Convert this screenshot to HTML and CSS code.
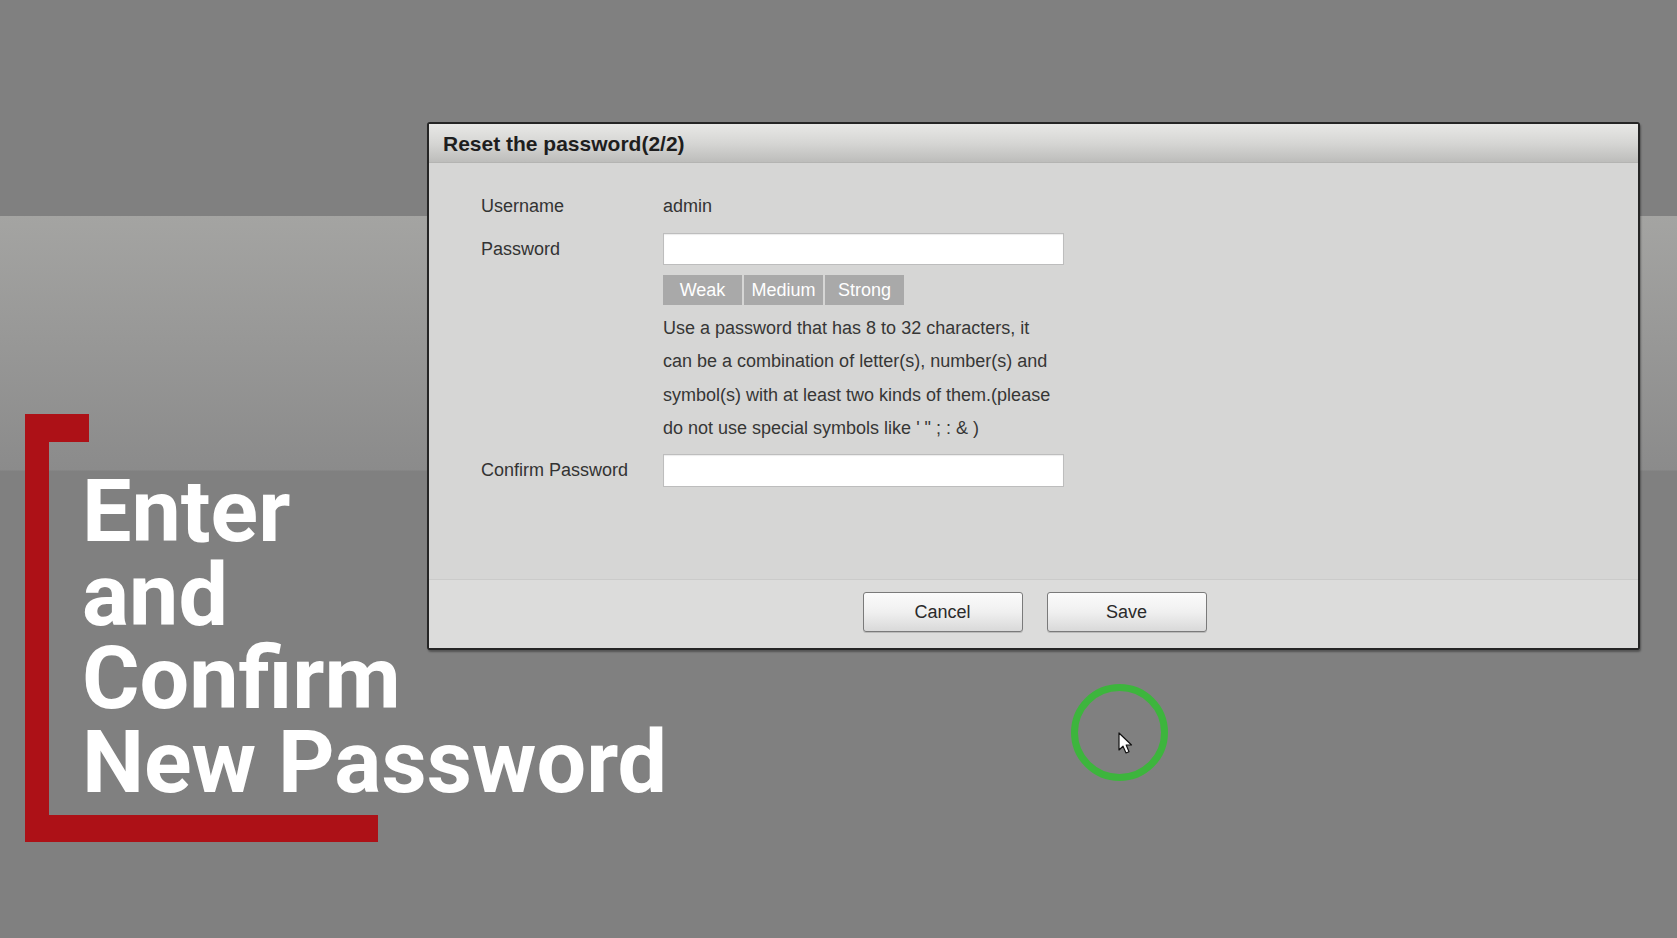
FILE: index.html
```html
<!DOCTYPE html>
<html lang="en">
<head>
<meta charset="utf-8">
<title>Reset the password</title>
<link rel="stylesheet" href="styles.css">
</head>
<body>
<div class="stage">
  <div class="dialog">
    <div class="dlg-title">Reset the password(2/2)</div>
    <div class="dlg-body">
      <div class="row">
        <span class="label">Username</span>
        <span class="value">admin</span>
      </div>
      <div class="row row-gap">
        <span class="label">Password</span>
        <input class="text-input" type="password">
      </div>
      <div class="strength">
        <span class="seg">Weak</span>
        <span class="seg">Medium</span>
        <span class="seg">Strong</span>
      </div>
      <p class="help">Use a password that has 8 to 32 characters, it can be a combination of letter(s), number(s) and symbol(s) with at least two kinds of them.(please do not use special symbols like ' " ; : &amp; )</p>
      <div class="row row-confirm">
        <span class="label">Confirm Password</span>
        <input class="text-input" type="password">
      </div>
    </div>
    <div class="dlg-footer">
      <button class="btn" type="button">Cancel</button>
      <button class="btn" type="button">Save</button>
    </div>
  </div>

  <svg class="bracket" width="354" height="429" viewBox="0 0 354 429" aria-hidden="true">
    <polygon points="0,0 64,0 64,28 24,28 24,401 353,401 353,428 0,428" fill="#ad1117"/>
  </svg>
  <h1 class="caption"><span>Enter</span><span>and</span><span>Confirm</span><span>New Password</span></h1>

  <div class="click-ring"></div>
  <svg class="cursor" width="16" height="24" viewBox="0 0 16 24" aria-hidden="true">
    <path d="M1,1 L1,18 L5,14.2 L8,21 L11,19.7 L8.2,13 L13.5,13 Z" fill="#fff" stroke="#111" stroke-width="1.2" stroke-linejoin="round"/>
  </svg>
</div>
</body>
</html>
```
FILE: styles.css
```css
* { box-sizing: border-box; }

html, body {
  margin: 0;
  padding: 0;
  width: 1677px;
  height: 938px;
  overflow: hidden;
  background: #808080;
}

.stage {
  position: relative;
  width: 1677px;
  height: 938px;
  overflow: hidden;
  padding: 122px 0 0 427px;
  background: linear-gradient(to bottom,
    #808080 0, #808080 216px,
    #a4a4a2 216px, #8b8b8b 470px,
    #808080 471px, #808080 100%);
  font-family: "Liberation Sans", Arial, sans-serif;
}

.dialog {
  width: 1213px;
  height: 528px;
  display: flex;
  flex-direction: column;
  border: 2px solid #252525;
  border-radius: 3px;
  background: #d6d6d5;
  box-shadow: 1px 2px 2px rgba(0,0,0,0.35);
}

.dlg-title {
  height: 39px;
  flex: none;
  display: flex;
  align-items: center;
  padding: 2px 0 0 14px;
  font-size: 21px;
  font-weight: bold;
  color: #1e1e1e;
  background: linear-gradient(to bottom, #e8e8e6 0%, #d6d6d4 50%, #bdbdbb 100%);
  border-bottom: 1px solid #b4b4b2;
}

.dlg-body {
  flex: 1;
  padding: 27px 0 0 52px;
  color: #333;
  font-size: 18px;
}

.row {
  display: flex;
  align-items: center;
  height: 32px;
}

.row-gap { margin-top: 11px; }
.row-confirm { margin-top: 9px; }

.label {
  width: 182px;
  flex: none;
  color: #333;
}

.value { color: #333; }

.text-input {
  width: 401px;
  height: 32px;
  margin: 0;
  border: 1px solid #bdbdbd;
  background: #fff;
  box-shadow: inset 0 1px 1px rgba(0,0,0,0.08);
  outline: none;
}

.row-confirm .text-input { height: 33px; }

.strength {
  display: flex;
  gap: 2px;
  margin: 10px 0 0 182px;
  height: 30px;
}

.seg {
  width: 79px;
  display: flex;
  align-items: center;
  justify-content: center;
  background: #a9a9a9;
  color: #fff;
  font-size: 18px;
}

.help {
  margin: 7px 0 0 182px;
  width: 394px;
  line-height: 33.4px;
  font-size: 18px;
  color: #363636;
}

.dlg-footer {
  height: 69px;
  flex: none;
  display: flex;
  align-items: flex-start;
  justify-content: center;
  gap: 24px;
  padding: 12px 0 0 2px;
  background: #dcdcdb;
  border-top: 1px solid #cbcbca;
}

.btn {
  width: 160px;
  height: 40px;
  border: 1px solid #7a7a7a;
  border-radius: 3px;
  background: linear-gradient(to bottom, #fbfbfb 0%, #f0f0f0 50%, #d9d9d9 100%);
  font-family: "Liberation Sans", Arial, sans-serif;
  font-size: 18px;
  color: #2a2a2a;
  box-shadow: 0 1px 0 rgba(0,0,0,0.15);
}

.bracket {
  position: absolute;
  left: 25px;
  top: 414px;
}

.caption {
  position: absolute;
  left: 82px;
  top: 469px;
  margin: 0;
  font-family: Roboto, "Liberation Sans", sans-serif;
  font-weight: 700;
  font-size: 88px;
  line-height: 83.5px;
  color: #fff;
  white-space: nowrap;
}

.caption span { display: block; }

.click-ring {
  position: absolute;
  left: 1071px;
  top: 684px;
  width: 97px;
  height: 97px;
  border: 7px solid #3db53d;
  border-radius: 50%;
  filter: blur(0.5px);
}

.cursor {
  position: absolute;
  left: 1118px;
  top: 732px;
}
```
